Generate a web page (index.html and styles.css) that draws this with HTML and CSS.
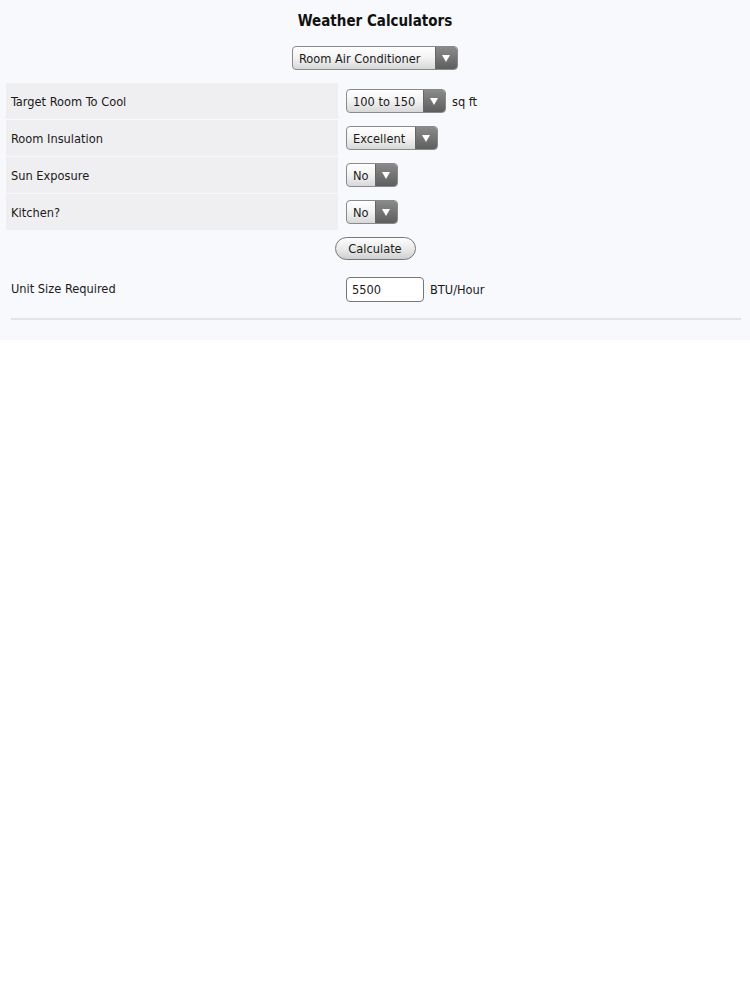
FILE: index.html
```html
<!DOCTYPE html>
<html>
<head>
<meta charset="utf-8">
<link rel="stylesheet" href="styles.css">
</head>
<body>
<div class="page">
  <h1 class="title">Weather Calculators</h1>
  <div class="top-select-row">
    <div class="sel sel-main"><span class="sel-text">Room Air Conditioner</span><span class="sel-arrow"></span></div>
  </div>
  <div class="form">
    <div class="label">Target Room To Cool</div>
    <div class="field"><div class="sel sel-area"><span class="sel-text">100 to 150</span><span class="sel-arrow"></span></div><span class="unit">sq ft</span></div>
    <div class="label">Room Insulation</div>
    <div class="field"><div class="sel sel-ins"><span class="sel-text">Excellent</span><span class="sel-arrow"></span></div></div>
    <div class="label">Sun Exposure</div>
    <div class="field"><div class="sel sel-no"><span class="sel-text">No</span><span class="sel-arrow"></span></div></div>
    <div class="label">Kitchen?</div>
    <div class="field"><div class="sel sel-no"><span class="sel-text">No</span><span class="sel-arrow"></span></div></div>
  </div>
  <div class="calc-row"><div class="btn">Calculate</div></div>
  <div class="result">
    <div class="label-plain">Unit Size Required</div>
    <div class="field"><div class="input">5500</div><span class="unit">BTU/Hour</span></div>
  </div>
  <div class="rule"></div>
</div>
</body>
</html>
```
FILE: styles.css
```css
html, body { margin: 0; padding: 0; background: #ffffff; }
body { font-family: "DejaVu Sans Condensed", "DejaVu Sans", sans-serif; font-size: 12.7px; color: #1a1a1a; }
.page { background: #f8f9fc; height: 340px; padding-top: 11px; box-sizing: border-box; }
.title { margin: 0; text-align: center; font-size: 15px; font-weight: bold; line-height: 20px; color: #111; }
.top-select-row { display: flex; justify-content: center; margin-top: 15px; }
.sel { display: flex; height: 24px; box-sizing: border-box; border: 1px solid #8a8a8a; border-radius: 4px; overflow: hidden; background: linear-gradient(#ffffff, #f2f2f2 50%, #d8d8d8); }
.sel-text { flex: 1; padding-left: 6px; line-height: 23px; white-space: nowrap; }
.sel-arrow { width: 21px; position: relative; background: linear-gradient(#8a8a8a, #5e5e5e); border-left: 1px solid #666; }
.sel-arrow::after { content: ""; position: absolute; left: 6px; top: 8px; border-left: 4.5px solid transparent; border-right: 4.5px solid transparent; border-top: 7px solid #fff; }
.sel-main { width: 166px; }
.sel-area { width: 100px; }
.sel-ins { width: 92px; }
.sel-no { width: 52px; }
.form { display: grid; grid-template-columns: 332px 1fr; row-gap: 1px; margin: 13px 9px 0 6px; }
.label { background: #efeff1; height: 36px; line-height: 37px; padding-left: 5px; }
.field { display: flex; align-items: center; padding-left: 8px; }
.unit { margin-left: 6px; }
.calc-row { display: flex; justify-content: center; margin-top: 7px; }
.btn { height: 23px; width: 81px; box-sizing: border-box; border: 1px solid #777; border-radius: 12px; background: linear-gradient(#fdfdfd, #e6e6e6 60%, #cfcfcf); text-align: center; line-height: 22px; }
.result { display: grid; grid-template-columns: 332px 1fr; margin: 16px 9px 0 6px; height: 25px; }
.label-plain { padding-left: 5px; line-height: 26px; }
.input { width: 78px; height: 25px; box-sizing: border-box; border: 1px solid #777; border-radius: 4px; background: #fff; padding-left: 5px; line-height: 24px; }
.rule { margin: 17px 9px 0 11px; height: 2px; background: #e4e4e6; }
```
